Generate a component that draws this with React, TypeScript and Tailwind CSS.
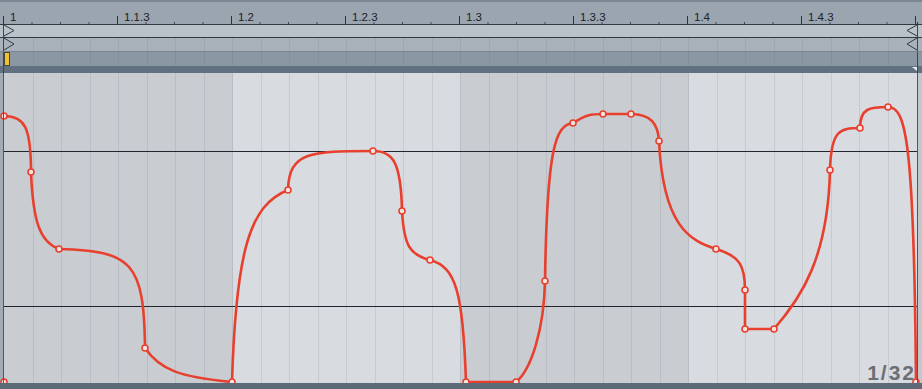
import React from 'react';

const RED = '#e8402f';
const STEP = 28.5;
const X0 = 4;
const X1 = 917;
const ticks = Array.from({ length: 33 }, (_, i) => X0 + i * STEP);
const LABELS = ['1', '1.1.3', '1.2', '1.2.3', '1.3', '1.3.3', '1.4', '1.4.3'];

// breakpoints of the envelope, in page coordinates
const POINTS: [number, number][] = [
  [4, 116], [31, 172], [59, 249], [145, 348], [232, 382], [288, 190], [373, 151],
  [402, 211], [430, 260], [466, 382], [516, 382], [545, 281], [573, 123], [603, 114],
  [631, 114], [659, 141], [716, 249], [745, 290], [745, 329], [774, 329], [830, 170],
  [860, 128], [888, 107], [916, 382],
];

const CURVE = [
  'M4 116',
  'C25 116 31 128 31 172',
  'C33 222 40 242 59 249',
  'C132 251 144 262 145 348',
  'C160 370 180 377 232 382',
  'C236 250 250 205 288 190',
  'C289 152 310 151 373 151',
  'C392 151 401 160 402 211',
  'C404 246 410 255 430 260',
  'C456 267 463 292 466 382',
  'L516 382',
  'C531 370 544 330 545 281',
  'C547 150 555 125 573 123',
  'C586 115 590 114 603 114',
  'L631 114',
  'C651 114 658 124 659 141',
  'C663 226 690 241 716 249',
  'C740 256 745 266 745 290',
  'L745 329',
  'L774 329',
  'C801 298 828 258 830 170',
  'C831 130 840 128 860 128',
  'C860 108 870 107 888 107',
  'C906 107 914 140 916 382',
].join(' ');

function Ruler() {
  return (
    <svg width={922} height={22} viewBox="0 2 922 22" className="block">
      {ticks.map((x, i) =>
        i % 4 === 0 ? (
          <line key={i} x1={x - 0.5} y1={16} x2={x - 0.5} y2={24} stroke="#2b333d" strokeWidth={1} />
        ) : (
          <line key={i} x1={x - 0.5} y1={22} x2={x - 0.5} y2={24} stroke="#3e4752" strokeWidth={1} />
        ),
      )}
      {LABELS.map((label, i) => (
        <text
          key={label}
          x={X0 + i * 4 * STEP + 6}
          y={21}
          fontSize="11.5"
          fill="#1c2127"
          style={{ fontFamily: '"Liberation Sans", Arial, sans-serif' }}
        >
          {label}
        </text>
      ))}
      <line x1={3.5} y1={16} x2={3.5} y2={24} stroke="#2b333d" />
      <line x1={X1 + 0.5} y1={22} x2={X1 + 0.5} y2={24} stroke="#2b333d" />
    </svg>
  );
}

function Strip({ y, h, grid, gridColor, children }: { y: number; h: number; grid?: boolean; gridColor?: string; children?: React.ReactNode }) {
  return (
    <svg width={922} height={h} viewBox={`0 ${y} 922 ${h}`} className="block">
      {grid &&
        ticks.slice(1, -1).map((x, i) => (
          <line key={i} x1={Math.round(x) + 0.5} y1={y} x2={Math.round(x) + 0.5} y2={y + h} stroke={gridColor} />
        ))}
      {children}
      <line x1={3.5} y1={y} x2={3.5} y2={y + h} stroke="#3c4652" />
      <line x1={X1 + 0.5} y1={y} x2={X1 + 0.5} y2={y + h} stroke="#3c4652" />
    </svg>
  );
}

function Automation() {
  return (
    <svg width={922} height={310} viewBox="0 73 922 310" className="block">
      <rect x={0} y={73} width={3} height={310} fill="#a3abb5" />
      <rect x={4} y={73} width={228} height={310} fill="#c9cdd2" />
      <rect x={232} y={73} width={228} height={310} fill="#d8dbdf" />
      <rect x={460} y={73} width={228} height={310} fill="#c9cdd2" />
      <rect x={688} y={73} width={229} height={310} fill="#d8dbdf" />
      <rect x={918} y={73} width={4} height={310} fill="#c3c7cc" />
      {ticks.slice(1, -1).map((x, i) => {
        const light = (x > 232 && x < 460) || x > 688;
        return (
          <line
            key={i}
            x1={Math.round(x) + 0.5}
            y1={73}
            x2={Math.round(x) + 0.5}
            y2={383}
            stroke={light ? '#c7cbd0' : '#b9bec4'}
          />
        );
      })}
      <line x1={4} y1={151.5} x2={917} y2={151.5} stroke="#1f2630" />
      <line x1={4} y1={306.5} x2={917} y2={306.5} stroke="#1f2630" />
      <path d={CURVE} fill="none" stroke={RED} strokeWidth={2.6} strokeLinejoin="round" />
      {POINTS.map(([x, y], i) => (
        <circle key={i} cx={x} cy={y} r={3} fill="#f3e3e1" stroke={RED} strokeWidth={1.6} />
      ))}
      <circle cx={4} cy={382} r={3} fill="#f3e3e1" stroke={RED} strokeWidth={1.6} />
      <line x1={3.5} y1={73} x2={3.5} y2={383} stroke="#4d5865" />
      <line x1={X1 + 0.5} y1={73} x2={X1 + 0.5} y2={383} stroke="#4d5865" />
    </svg>
  );
}

export default function App() {
  return (
    <div className="flex h-[389px] w-[922px] flex-col overflow-hidden bg-[#9ba5af] font-['Liberation_Sans',Arial,sans-serif]">
      <div className="h-[2px] bg-[#7b8692]" />
      <div className="h-[22px] bg-[#9ba5af]">
        <Ruler />
      </div>
      <div className="h-[1px] bg-[#2f3843]" />
      <div className="h-[12px] bg-[#b9c1c9]">
        <Strip y={25} h={12}>
          <polyline points="4,25 14,30.5 4,36" fill="none" stroke="#303a45" />
          <polyline points="917,25 907,30.5 917,36" fill="none" stroke="#303a45" />
        </Strip>
      </div>
      <div className="h-[1px] bg-[#303a45]" />
      <div className="h-[13px] bg-[#a9b2bb]">
        <Strip y={38} h={13} grid gridColor="#9da7b1">
          <polyline points="4,38 14,44 4,50" fill="none" stroke="#303a45" />
          <polyline points="917,38 907,44 917,50" fill="none" stroke="#303a45" />
        </Strip>
      </div>
      <div className="h-[1px] bg-[#7a8590]" />
      <div className="h-[14px] bg-[#8b97a2]">
        <Strip y={52} h={14} grid gridColor="#838f9b">
          <rect x={4.5} y={52.5} width={5} height={13} fill="#f0c232" stroke="#4a4a3a" />
        </Strip>
      </div>
      <div className="h-[7px] bg-[#627181]">
        <Strip y={66} h={7}>
          <polygon points="912,67 917,67 917,71" fill="#e8edf2" />
        </Strip>
      </div>
      <div className="relative h-[310px]">
        <Automation />
        <span className="absolute bottom-0 right-[6px] text-[21px] font-bold leading-none tracking-[2px] text-[#6b6f75]">
          1/32
        </span>
      </div>
      <div className="h-[6px] bg-[#5d6a78]" />
    </div>
  );
}
